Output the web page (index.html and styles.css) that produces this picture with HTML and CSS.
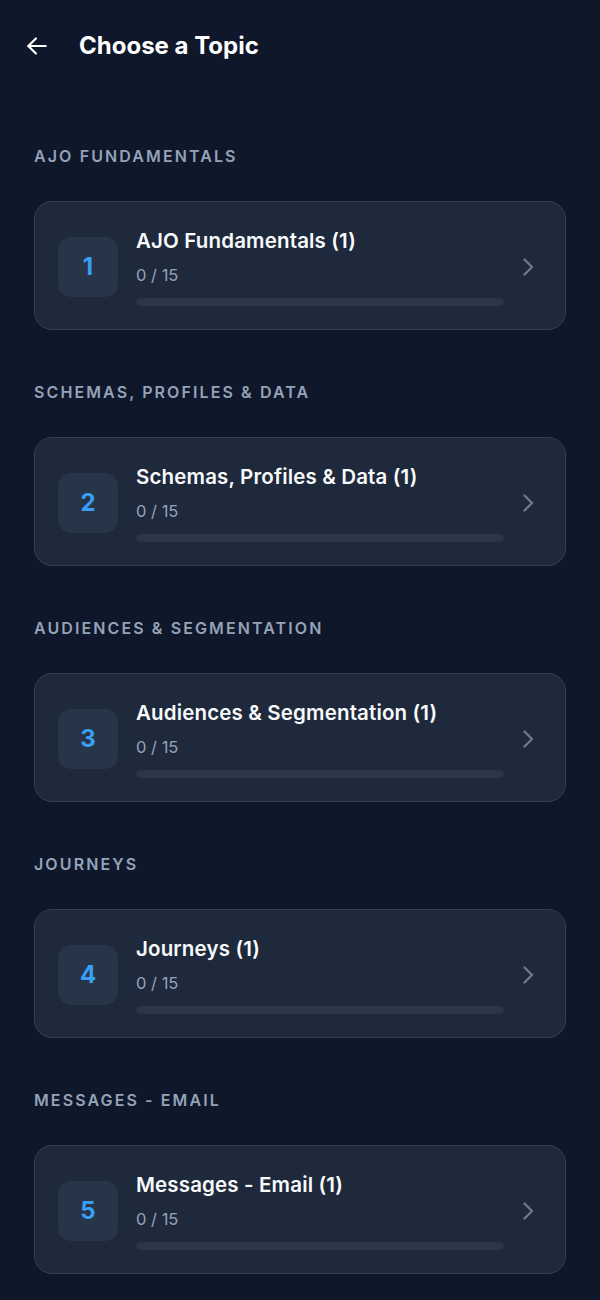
FILE: index.html
```html
<!DOCTYPE html>
<html lang="en">
<head>
    <meta charset="UTF-8">
    <meta name="viewport" content="width=device-width, initial-scale=1.0">
    <title>Choose a Topic</title>
    <link rel="stylesheet" href="styles.css">
</head>
<body>
    <div class="header">
        <button class="back" aria-label="Back">
            <svg width="26" height="26" viewBox="0 0 24 24" fill="none" stroke="currentColor" stroke-width="2" stroke-linecap="round" stroke-linejoin="round">
                <path d="M20 12H4"/>
                <path d="M11 5l-7 7 7 7"/>
            </svg>
        </button>
        <h1 class="title">Choose a Topic</h1>
    </div>

    <div class="topics">
        <div class="section">
            <div class="section-label">AJO Fundamentals</div>
            <div class="card">
                <div class="num">1</div>
                <div class="info">
                    <div class="name">AJO Fundamentals (1)</div>
                    <div class="count">0 / 15</div>
                    <div class="bar"><div class="fill" style="width: 0%"></div></div>
                </div>
                <svg class="chevron" width="14" height="20" viewBox="0 0 14 20" fill="none" stroke="currentColor" stroke-width="2.4" stroke-linecap="round" stroke-linejoin="round"><path d="M3.5 2.5l7.5 7.5-7.5 7.5"/></svg>
            </div>
        </div>

        <div class="section">
            <div class="section-label">Schemas, Profiles &amp; Data</div>
            <div class="card">
                <div class="num">2</div>
                <div class="info">
                    <div class="name">Schemas, Profiles &amp; Data (1)</div>
                    <div class="count">0 / 15</div>
                    <div class="bar"><div class="fill" style="width: 0%"></div></div>
                </div>
                <svg class="chevron" width="14" height="20" viewBox="0 0 14 20" fill="none" stroke="currentColor" stroke-width="2.4" stroke-linecap="round" stroke-linejoin="round"><path d="M3.5 2.5l7.5 7.5-7.5 7.5"/></svg>
            </div>
        </div>

        <div class="section">
            <div class="section-label">Audiences &amp; Segmentation</div>
            <div class="card">
                <div class="num">3</div>
                <div class="info">
                    <div class="name">Audiences &amp; Segmentation (1)</div>
                    <div class="count">0 / 15</div>
                    <div class="bar"><div class="fill" style="width: 0%"></div></div>
                </div>
                <svg class="chevron" width="14" height="20" viewBox="0 0 14 20" fill="none" stroke="currentColor" stroke-width="2.4" stroke-linecap="round" stroke-linejoin="round"><path d="M3.5 2.5l7.5 7.5-7.5 7.5"/></svg>
            </div>
        </div>

        <div class="section">
            <div class="section-label">Journeys</div>
            <div class="card">
                <div class="num">4</div>
                <div class="info">
                    <div class="name">Journeys (1)</div>
                    <div class="count">0 / 15</div>
                    <div class="bar"><div class="fill" style="width: 0%"></div></div>
                </div>
                <svg class="chevron" width="14" height="20" viewBox="0 0 14 20" fill="none" stroke="currentColor" stroke-width="2.4" stroke-linecap="round" stroke-linejoin="round"><path d="M3.5 2.5l7.5 7.5-7.5 7.5"/></svg>
            </div>
        </div>

        <div class="section">
            <div class="section-label">Messages - Email</div>
            <div class="card">
                <div class="num">5</div>
                <div class="info">
                    <div class="name">Messages - Email (1)</div>
                    <div class="count">0 / 15</div>
                    <div class="bar"><div class="fill" style="width: 0%"></div></div>
                </div>
                <svg class="chevron" width="14" height="20" viewBox="0 0 14 20" fill="none" stroke="currentColor" stroke-width="2.4" stroke-linecap="round" stroke-linejoin="round"><path d="M3.5 2.5l7.5 7.5-7.5 7.5"/></svg>
            </div>
        </div>
    </div>
</body>
</html>
```

FILE: styles.css
```css
body {
    margin: 0;
    font-family: 'Inter', 'Roboto', sans-serif;
    background-color: #0f172a;
    color: #fff;
    min-height: 1300px;
}

.header {
    display: flex;
    align-items: center;
    padding: 30px 24px 0 24px;
    height: 32px;
}

.back {
    background: none;
    border: none;
    color: #fff;
    padding: 0;
    width: 26px;
    height: 26px;
    display: flex;
    cursor: pointer;
}

.title {
    margin: 0 0 0 29px;
    font-size: 24px;
    font-weight: 700;
    line-height: 32px;
}

.topics {
    padding: 84px 34px 0 34px;
    display: flex;
    flex-direction: column;
    gap: 52px;
}

.section-label {
    font-size: 16px;
    font-weight: 600;
    line-height: 20px;
    letter-spacing: 2.1px;
    text-transform: uppercase;
    color: #94a3b8;
    margin-bottom: 35px;
}

.card {
    display: flex;
    align-items: center;
    background-color: #1e293b;
    border: 1px solid #334155;
    border-radius: 18px;
    padding: 25px 30px 23px 23px;
    cursor: pointer;
}

.num {
    flex: none;
    width: 60px;
    height: 60px;
    border-radius: 13px;
    background-color: #273549;
    color: #3b9ef5;
    font-size: 24px;
    font-weight: 700;
    display: flex;
    align-items: center;
    justify-content: center;
    margin-right: 18px;
}

.info {
    flex: 1;
    min-width: 0;
}

.name {
    font-size: 20.5px;
    font-weight: 600;
    line-height: 28px;
    letter-spacing: 0.15px;
    color: #f8fafc;
}

.count {
    margin-top: 9px;
    font-size: 16.5px;
    line-height: 22px;
    color: #94a3b8;
}

.bar {
    margin-top: 12px;
    height: 8px;
    border-radius: 4px;
    background-color: #2b3749;
    overflow: hidden;
}

.fill {
    height: 100%;
    background-color: #3b9ef5;
}

.chevron {
    flex: none;
    margin-left: 17px;
    color: #6b7a8f;
}
```
